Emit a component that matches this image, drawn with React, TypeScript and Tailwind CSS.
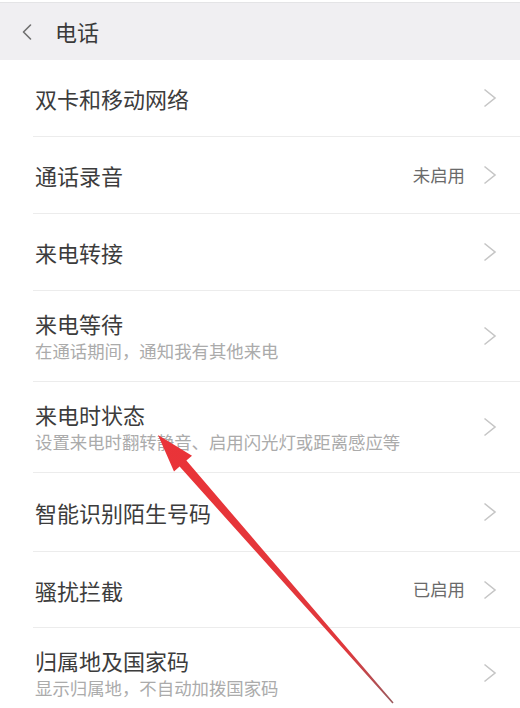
import { ChevronLeft } from 'lucide-react';

type Item = {
  title: string;
  subtitle?: string;
  value?: string;
  height: string;
};

const items: Item[] = [
  { title: '双卡和移动网络', height: 'h-[77px]' },
  { title: '通话录音', value: '未启用', height: 'h-[77px]' },
  { title: '来电转接', height: 'h-[77px]' },
  { title: '来电等待', subtitle: '在通话期间，通知我有其他来电', height: 'h-[91px]' },
  { title: '来电时状态', subtitle: '设置来电时翻转静音、启用闪光灯或距离感应等', height: 'h-[91px]' },
  { title: '智能识别陌生号码', height: 'h-[79px]' },
  { title: '骚扰拦截', value: '已启用', height: 'h-[76px]' },
  { title: '归属地及国家码', subtitle: '显示归属地，不自动加拨国家码', height: 'h-[91px]' },
];

function Chevron() {
  return (
    <svg width="14" height="20" viewBox="0 0 14 20" className="shrink-0">
      <polyline points="1.5,1.5 12,10 1.5,18.5" fill="none" stroke="#c6c6c6" strokeWidth="1.6" />
    </svg>
  );
}

function Row({ item }: { item: Item }) {
  return (
    <div className={`${item.height} ml-[33px] pl-[2px] pr-[23px] flex items-center border-b border-[#ececec]`}>
      <div className="flex-1 min-w-0">
        <div className="text-[22px] leading-[28px] text-[#3c3c3c]">{item.title}</div>
        {item.subtitle && (
          <div className="text-[17.4px] leading-[24px] mt-[2px] text-[#ababab] whitespace-nowrap">{item.subtitle}</div>
        )}
      </div>
      {item.value && <span className="text-[17.4px] text-[#6a6a6a] mr-[18px]">{item.value}</span>}
      <Chevron />
    </div>
  );
}

function Arrow() {
  return (
    <svg className="absolute inset-0 pointer-events-none" width="520" height="708" viewBox="0 0 520 708">
      <defs>
        <linearGradient id="shaft" x1="158" y1="435" x2="393" y2="703" gradientUnits="userSpaceOnUse">
          <stop offset="0" stopColor="#ea3338" />
          <stop offset="0.8" stopColor="#e0383c" />
          <stop offset="1" stopColor="#9a5a5e" />
        </linearGradient>
      </defs>
      <polygon
        points="158,435 192,455.7 186.4,460.6 393.6,702.4 392.4,703.6 179.6,466.6 174,471.5"
        fill="url(#shaft)"
      />
    </svg>
  );
}

export default function App() {
  return (
    <div
      className="relative w-[520px] h-[708px] overflow-hidden bg-white"
      style={{ fontFamily: '"Noto Sans CJK SC", "Noto Sans", sans-serif' }}
    >
      <div className="h-[2px] bg-white" />
      <header className="h-[58px] bg-[#f0eff2] border-t border-[#e4e4e6] flex items-center">
        <ChevronLeft className="ml-[13px] w-[28px] h-[28px] text-[#707070]" strokeWidth={1.4} />
        <span className="ml-[14px] text-[22px] text-[#3a3a3a]">电话</span>
      </header>
      <div>
        {items.map((item) => (
          <Row key={item.title} item={item} />
        ))}
      </div>
      <Arrow />
    </div>
  );
}
